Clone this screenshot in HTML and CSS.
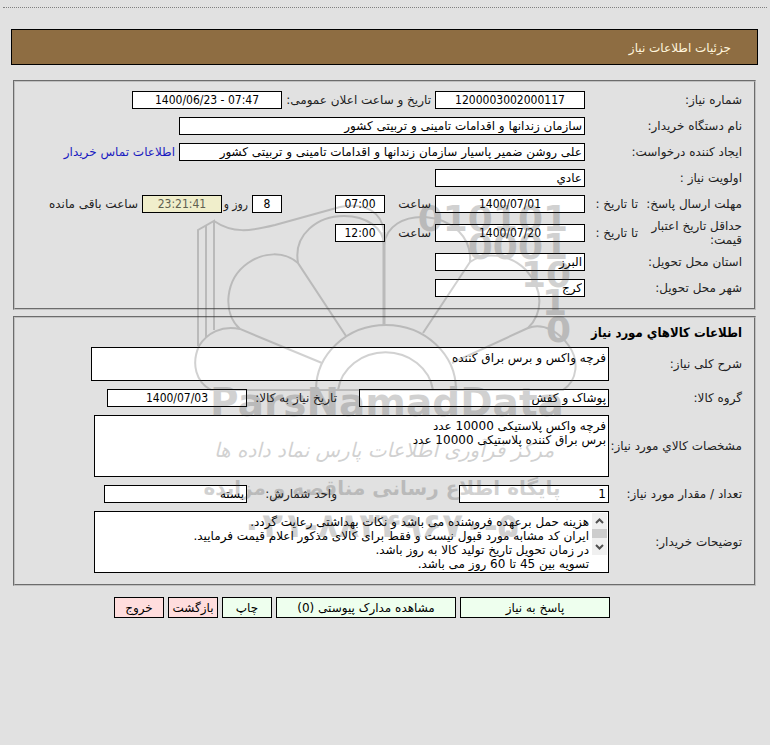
FILE: index.html
```html
<!DOCTYPE html>
<html lang="fa" dir="rtl">
<head>
  <meta charset="utf-8">
  <title>جزئیات اطلاعات نیاز</title>
  <link rel="stylesheet" href="styles.css">
</head>
<body>

<h1 class="title-bar">جزئیات اطلاعات نیاز</h1>

<form>
  <fieldset class="panel general">
    <div class="row">
      <label class="name" for="needNo">شماره نیاز:</label>
      <input class="w150 center" id="needNo" value="1200003002000117" readonly>
      <label class="announce" for="announceDate">تاریخ و ساعت اعلان عمومی:</label>
      <input class="w150 center" id="announceDate" dir="ltr" value="1400/06/23 - 07:47" readonly>
    </div>
    <div class="row">
      <label class="name" for="buyer">نام دستگاه خریدار:</label>
      <input class="wide" id="buyer" value="سازمان زندانها و اقدامات تامینی و تربیتی کشور" readonly>
    </div>
    <div class="row">
      <label class="name" for="creator">ایجاد کننده درخواست:</label>
      <input class="wide" id="creator" value="علی روشن ضمیر پاسیار سازمان زندانها و اقدامات تامینی و تربیتی کشور" readonly>
      <a href="#">اطلاعات تماس خریدار</a>
    </div>
    <div class="row">
      <label class="name" for="priority">اولویت نیاز :</label>
      <input class="w150" id="priority" value="عادي" readonly>
    </div>
    <div class="row">
      <span class="name short">مهلت ارسال پاسخ:</span>
      <label class="until" for="replyDate">تا تاریخ :</label>
      <input class="w150 center" id="replyDate" value="1400/07/01" readonly>
      <label class="hour" for="replyHour">ساعت</label>
      <input class="w50 center" id="replyHour" value="07:00" readonly>
      <input class="w30 center days" id="daysLeft" value="8" readonly>
      <label class="and" for="daysLeft">روز و</label>
      <input class="w80 center timer" id="timeLeft" value="23:21:41" readonly>
      <label for="timeLeft">ساعت باقی مانده</label>
    </div>
    <div class="row">
      <span class="name short">حداقل تاریخ اعتبار قیمت:</span>
      <label class="until" for="validDate">تا تاریخ :</label>
      <input class="w150 center" id="validDate" value="1400/07/20" readonly>
      <label class="hour" for="validHour">ساعت</label>
      <input class="w50 center" id="validHour" value="12:00" readonly>
    </div>
    <div class="row">
      <label class="name" for="province">استان محل تحویل:</label>
      <input class="w150" id="province" value="البرز" readonly>
    </div>
    <div class="row">
      <label class="name" for="city">شهر محل تحویل:</label>
      <input class="w150" id="city" value="کرج" readonly>
    </div>
  </fieldset>

  <fieldset class="panel goods">
    <h2>اطلاعات کالاهاي مورد نیاز</h2>
    <div class="row">
      <label class="name" for="summary">شرح کلی نیاز:</label>
      <textarea class="summary" id="summary" readonly>فرچه واکس و برس براق کننده</textarea>
    </div>
    <div class="row">
      <label class="name" for="group">گروه کالا:</label>
      <div class="cell"><input class="w250" id="group" value="پوشاک و کفش" readonly></div>
      <label class="second" for="needDate">تاریخ نیاز به کالا:</label>
      <input class="w140 center" id="needDate" value="1400/07/03" readonly>
    </div>
    <div class="row">
      <label class="name" for="spec">مشخصات کالاي مورد نیاز:</label>
      <textarea class="memo" id="spec" readonly>فرچه واکس پلاستیکی 10000 عدد
برس براق کننده پلاستیکی 10000 عدد</textarea>
    </div>
    <div class="row">
      <label class="name" for="count">تعداد / مقدار مورد نیاز:</label>
      <div class="cell"><input class="w150" id="count" value="1" readonly></div>
      <label class="second" for="unit">واحد شمارش:</label>
      <input class="w143" id="unit" value="بسته" readonly>
    </div>
    <div class="row">
      <label class="name" for="notes">توضیحات خریدار:</label>
      <div class="memo notes">
        <svg class="scroll" viewBox="0 0 15 42" aria-hidden="true">
          <rect width="15" height="42" fill="#f0f0f0"/>
          <rect y="16" width="15" height="9" fill="#cdcdcd"/>
          <path d="M4 10l3.500-3.500L11 10M4 32l3.500 3.500L11 32" fill="none" stroke="#505050" stroke-width="2"/>
        </svg>
        <textarea id="notes" readonly>هزینه حمل برعهده فروشنده می باشد و نکات بهداشتی رعایت گردد.
ایران کد مشابه مورد قبول نیست و فقط برای کالای مذکور اعلام قیمت فرمایید.
در زمان تحویل تاریخ تولید کالا به روز باشد.
تسویه بین 45 تا 60 روز می باشد.</textarea>
      </div>
    </div>
  </fieldset>

  <div class="buttons">
    <button type="button" class="w150">پاسخ به نیاز</button>
    <button type="button" class="w180">مشاهده مدارک پیوستی (0)</button>
    <button type="button" class="w50">چاپ</button>
    <button type="button" class="w50 red">بازگشت</button>
    <button type="button" class="w50 red">خروج</button>
  </div>
</form>

<!-- Watermark over the form -->
<svg class="watermark" viewBox="190 200 390 350" aria-hidden="true">
  <g class="lines">
    <path d="M198 346V230L214 221V330M206 338V226"/>
    <path d="M214 221C233 234 250 231 275 225L340 207C365 202 382 212 384 232"/>
    <path d="M346 336L298 263C293 234 318 216 344 216C366 216 384 228 384 245"/>
    <path d="M384 326V232" stroke-width="3"/>
    <path d="M322 363L240 329C222 313 225 279 248 263C264 252 284 251 298 263"/>
    <path d="M240 329C222 325 207 333 199 346C191 364 196 382 211 390H563C578 380 579 360 569 346C560 333 544 322 528 328L452 363"/>
    <path d="M384 245C386 226 404 216 425 217C453 219 472 238 470 262L423 333"/>
    <path d="M470 262C485 251 510 254 526 270C544 290 543 313 528 328"/>
    <path d="M316 390A70 65 0 0 1 456 390M338 390A48 44 0 0 1 433 390"/>
  </g>
  <g class="digits">
    <text x="568" y="231">010101</text>
    <text x="568" y="259">0001</text>
    <text x="571" y="287">10</text>
    <text x="567" y="315">1</text>
    <text x="571" y="342">0</text>
  </g>
  <text class="brand" x="387" y="416">ParsNamadData</text>
  <text class="script" x="384" y="457">مرکز فرآوری اطلاعات پارس نماد داده ها</text>
  <text class="tagline" x="382" y="495">پایگاه اطلاع رسانی مناقصه و مزایده</text>
  <text class="phone" x="380" y="537">۰۲۱-۸۸۳۴۹۶۷۰-۵</text>
</svg>

</body>
</html>
```
FILE: styles.css
```css
* {
  box-sizing: border-box;
}
body {
  margin: 7px 3px 0;
  border-top: 1px dotted #808080;
  padding: 21px 9px 0 8px;
  background-color: #e1e1e1;
  color: #222;
  font: 12px/14px "DejaVu Sans", sans-serif;
  position: relative;
}
.title-bar {
  height: 36px;
  margin: 0 0 15px;
  padding: 2px 26px 0 0;
  display: flex;
  align-items: center;
  background-color: #8e6d42;
  border: 1px solid black;
  color: #fff5dd;
  font-size: 12px;
  font-weight: normal;
}

/* Panels */
.panel {
  margin: 0 2px 6px;
  padding: 5px 12px 7px;
  min-width: 0;
  border: 2px groove #c0c0c0;
}
.panel h2 {
  height: 20px;
  margin: 0;
  font-family: "DejaVu Sans Condensed", "DejaVu Sans", sans-serif;
  font-size: 13px;
  line-height: 20px;
  color: black;
}
.row {
  display: flex;
  align-items: center;
  gap: 4px;
  min-height: 26px;
  padding: 2px 0;
  white-space: nowrap;
}
.name {
  flex: none;
  width: 153px;
}
.goods .name {
  width: 129px;
}
.row .short {
  width: 100px;
  white-space: normal;
}
.until {
  width: 49px;
}
.announce {
  width: 145px;
}
.hour {
  width: 42px;
}
.and {
  width: 22px;
  font-family: "DejaVu Sans Condensed", "DejaVu Sans", sans-serif;
}
.cell {
  width: 268px;
}
.second {
  width: 86px;
}

/* Fields */
input,
textarea {
  margin: 0;
  padding: 0 2px;
  border: 1px solid black;
  border-radius: 0;
  background-color: white;
  color: black;
  font: inherit;
}
input {
  height: 18px;
  flex: none;
}
textarea {
  display: block;
  padding: 3px 2px;
  overflow: hidden;
  resize: none;
}
.center {
  font-family: "DejaVu Sans Condensed", "DejaVu Sans", sans-serif;
  text-align: center;
}
.w30 { width: 30px; }
.w50 { width: 50px; }
.w80 { width: 80px; }
.w140 { width: 140px; }
.w143 { width: 143px; }
.w150 { width: 150px; }
.w180 { width: 180px; }
.w250 { width: 250px; }
.wide {
  width: 406px;
}
.days {
  margin-right: 49px;
}
.timer {
  background-color: #f0eecb;
  color: #606050;
}
.goods .row {
  padding: 4px 0;
}
.summary {
  width: 518px;
  height: 34px;
}
.memo {
  width: 515px;
  height: 62px;
}
.notes {
  display: flex;
  padding: 1px;
  border: 1px solid black;
  background-color: white;
}
.notes textarea {
  flex: 1;
  height: 58px;
  padding: 2px 3px 0;
  border: 0;
  background: none;
}
.scroll {
  width: 15px;
  height: 42px;
}
a {
  color: #1a1ac0;
  text-decoration: none;
}

/* Buttons */
.buttons {
  display: flex;
  gap: 4px;
  margin-top: 11px;
  padding-right: 148px;
}
button {
  height: 21px;
  padding: 0;
  border: 1px solid black;
  border-radius: 0;
  background-color: #eeffee;
  color: black;
  font: inherit;
}
.red {
  background-color: #ffdddd;
}

/* Watermark */
.watermark {
  position: absolute;
  top: 192px;
  left: 187px;
  width: 390px;
  height: 350px;
  overflow: visible;
  opacity: 0.22;
  pointer-events: none;
}
.lines {
  fill: none;
  stroke: #333;
  stroke-width: 2;
}
.watermark text {
  fill: #333;
  font-family: "DejaVu Sans", sans-serif;
  font-weight: bold;
  text-anchor: middle;
}
.watermark .digits text {
  direction: ltr;
  font-size: 36px;
  text-anchor: end;
}
.watermark .brand {
  direction: ltr;
  font-size: 39px;
}
.watermark .script {
  font-size: 20px;
  font-style: italic;
  font-weight: normal;
}
.watermark .tagline {
  font-size: 20px;
}
.watermark .phone {
  direction: ltr;
  font-size: 34px;
}
```
